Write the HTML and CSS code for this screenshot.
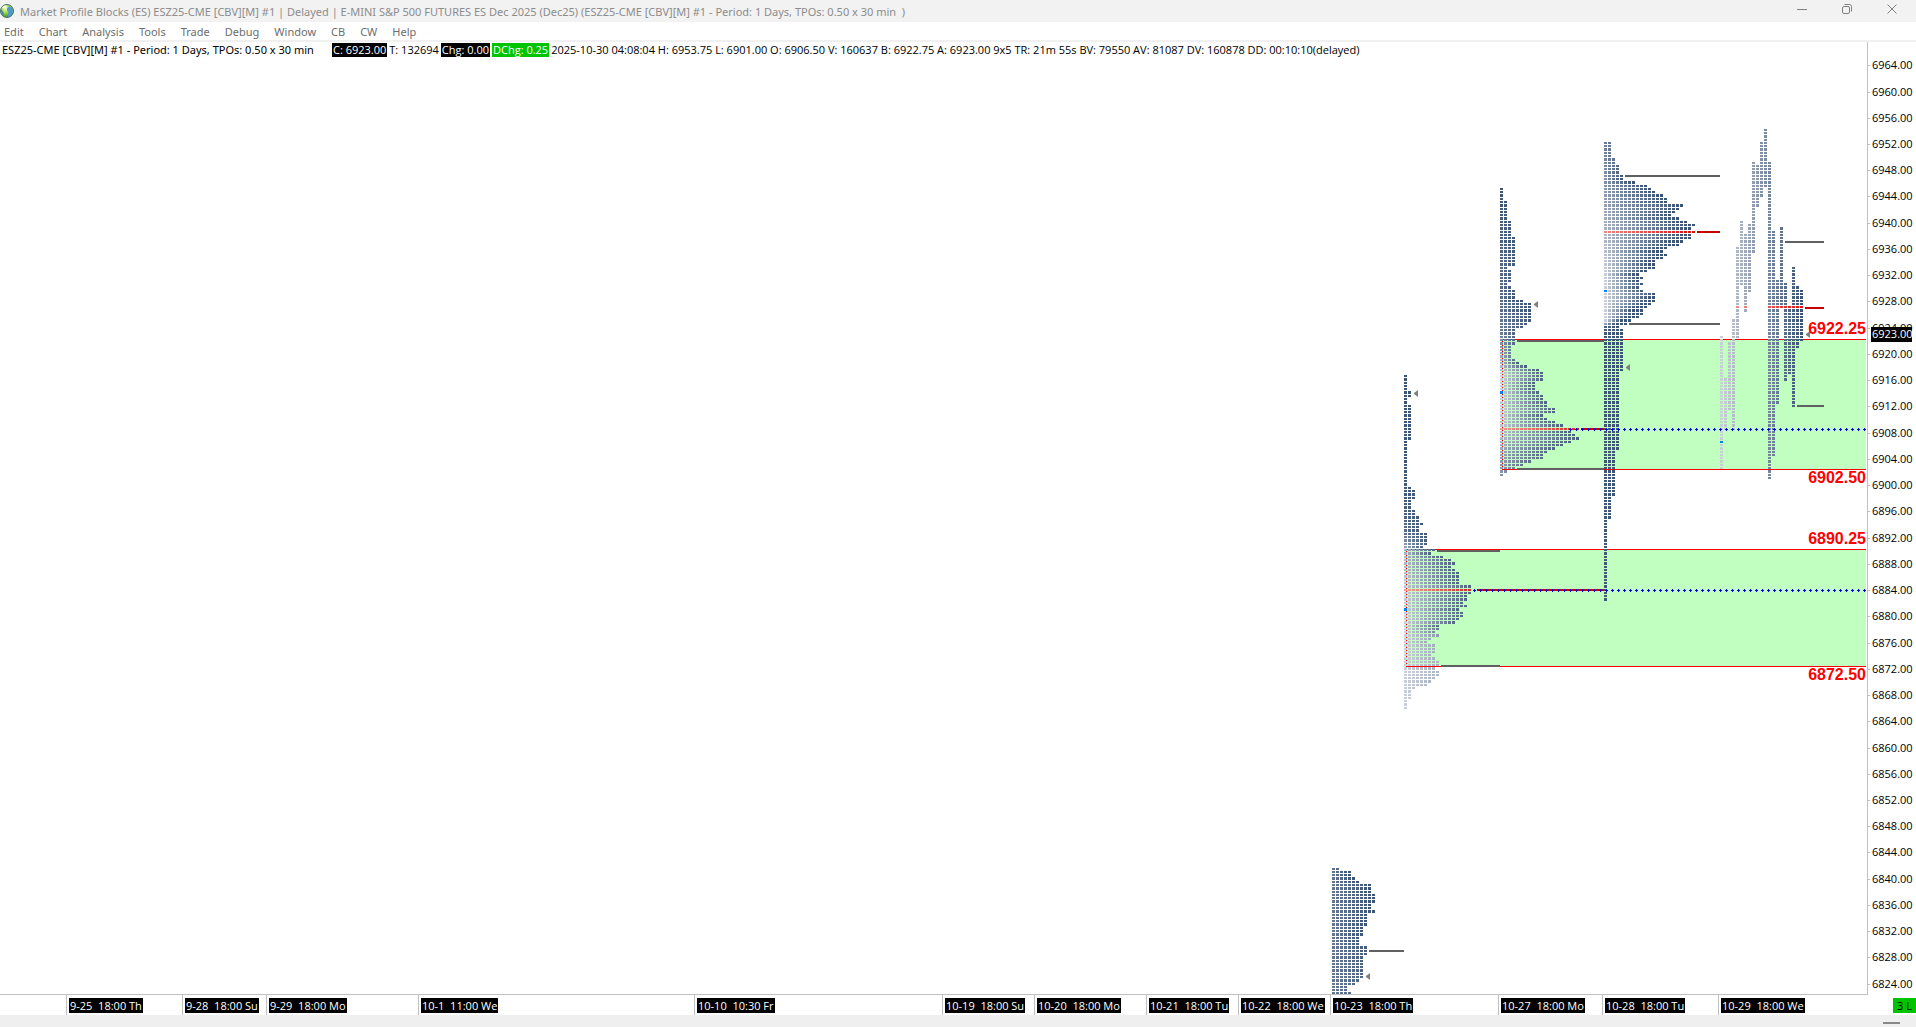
FILE: index.html
```html
<!DOCTYPE html>
<html lang="en">
<head>
    <meta charset="UTF-8">
    <meta name="viewport" content="width=device-width, initial-scale=1.0">
    <title>Market Profile Blocks (ES)</title>
    <link rel="stylesheet" href="styles.css">
</head>
<body>
    <header class="titlebar">
        <svg class="logo" width="14" height="14" viewBox="0 0 14 14">
            <defs>
                <radialGradient id="globe" cx="0.4" cy="0.3" r="0.7">
                    <stop offset="0" stop-color="#f4ffc8"/>
                    <stop offset="0.5" stop-color="#9bd838"/>
                    <stop offset="1" stop-color="#3c8a28"/>
                </radialGradient>
            </defs>
            <circle cx="7" cy="7" r="6.5" fill="url(#globe)" stroke="#4a7078"/>
            <path d="M9 2c3 1 4 3 4 5s-2 5-5 6c-1-2 1-3 0-5s-1-1-1-3 2-1 2-3z" fill="#4f9ad0"/>
            <path d="M1 5c0 4 1 6 3 7-1-2 0-3-1-4s-1-2-2-3z" fill="#3f80b0"/>
            <path d="M2 4c1-2 3-3 5-2-1 2-3 3-5 2z" fill="#fff" opacity="0.8"/>
        </svg>
        <span class="title">Market Profile Blocks (ES) ESZ25-CME [CBV][M] #1 | Delayed | E-MINI S&amp;P 500 FUTURES ES Dec 2025 (Dec25) (ESZ25-CME [CBV][M] #1 - Period: 1 Days, TPOs: 0.50 x 30 min &nbsp;)</span>
        <div class="winButtons">
            <button type="button" aria-label="Minimize"><svg width="10" height="10"><path d="M0 5.5h10"/></svg></button>
            <button type="button" aria-label="Restore"><svg width="10" height="10"><rect x="0.5" y="2.5" width="7" height="7" rx="1.5"/><path d="M2.5 0.5h5a2 2 0 0 1 2 2v5"/></svg></button>
            <button type="button" aria-label="Close"><svg width="10" height="10"><path d="M0.5 0.5l9 9M9.5 0.5l-9 9"/></svg></button>
        </div>
    </header>
    <nav class="menu">
        <button type="button">Edit</button>
        <button type="button">Chart</button>
        <button type="button">Analysis</button>
        <button type="button">Tools</button>
        <button type="button">Trade</button>
        <button type="button">Debug</button>
        <button type="button">Window</button>
        <button type="button">CB</button>
        <button type="button">CW</button>
        <button type="button">Help</button>
    </nav>
    <main class="chart">
        <div class="info">
            <span class="symbol">ESZ25-CME [CBV][M] #1 - Period: 1 Days, TPOs: 0.50 x 30 min</span>
            <span class="tag">C: 6923.00</span>
            <span>T: 132694</span>
            <span class="tag">Chg: 0.00</span>
            <span class="tag up">DChg: 0.25</span>
            <span>2025-10-30 04:08:04 H: 6953.75 L: 6901.00 O: 6906.50 V: 160637 B: 6922.75 A: 6923.00 9x5 TR: 21m 55s BV: 79550 AV: 81087 DV: 160878 DD: 00:10:10(delayed)</span>
        </div>
        <div class="plot">
            <svg id="profiles" width="560" height="952" viewBox="1307 42 560 952"></svg>
        </div>
        <div class="prices">
            <svg id="axis" width="48" height="952" viewBox="1868 42 48 952"></svg>
        </div>
    </main>
    <div class="times">
        <div class="sessions" id="sessions"></div>
        <span class="live">3 L</span>
    </div>
    <footer class="status"><span class="grip"></span></footer>
    <script src="script.js"></script>
</body>
</html>
```

FILE: styles.css
```css
* {
    box-sizing: border-box;
}
body {
    margin: 0;
    height: 100vh;
    display: flex;
    flex-direction: column;
    overflow: hidden;
    background-color: white;
    color: black;
    font-family: "Open Sans", "Noto Sans", sans-serif;
    font-size: 11px;
    line-height: 15px;
}
button {
    padding: 0;
    border: none;
    background: none;
    font: inherit;
    color: inherit;
}
svg {
    display: block;
}
.titlebar {
    display: flex;
    align-items: center;
    height: 22px;
    flex: none;
    background-color: #f2f2f2;
    color: #8c8c8c;
}
.titlebar,
.menu,
.symbol {
    font-family: "Noto Sans", "Open Sans", sans-serif;
}
.title {
    flex: 1;
    margin-left: 6px;
    white-space: nowrap;
    overflow: hidden;
}
.winButtons {
    display: flex;
    gap: 35px;
    padding-right: 19px;
    padding-bottom: 4px;
}
.winButtons path,
.winButtons rect {
    fill: none;
    stroke: #808080;
}
.menu {
    display: flex;
    align-items: center;
    gap: 15px;
    height: 20px;
    flex: none;
    padding-left: 4px;
    border-bottom: 2px solid #f0f0f0;
    color: #6d6d6d;
}
.chart {
    position: relative;
    display: flex;
    flex: 1;
    min-height: 0;
}
.info {
    position: absolute;
    top: 1px;
    left: 2px;
    display: flex;
    gap: 2px;
    line-height: 14px;
    white-space: nowrap;
}
.symbol {
    min-width: 328px;
}
.tag {
    padding: 0 1px;
    background-color: black;
    color: white;
}
.up {
    background-color: #00c400;
}
.plot {
    flex: 1;
    display: flex;
    justify-content: flex-end;
    border-right: 1px solid #c0c0c0;
    border-bottom: 1px solid #c0c0c0;
    overflow: hidden;
}
.prices {
    width: 48px;
    overflow: hidden;
}
.level {
    font: bold 16px "Liberation Sans", sans-serif;
    fill: red;
    text-anchor: end;
}
.times {
    display: flex;
    justify-content: space-between;
    height: 20px;
    flex: none;
}
.sessions {
    display: flex;
    padding-left: 66px;
}
.session {
    padding-left: 2px;
    border-left: 1px solid #c0c0c0;
    white-space: nowrap;
}
.session span {
    display: inline-block;
    margin-top: 3px;
    padding: 0 1px;
    background-color: black;
    color: white;
}
.live {
    width: 23px;
    height: 15px;
    margin-top: 3px;
    padding-left: 4px;
    background-color: #00c400;
    white-space: nowrap;
}
.status {
    display: flex;
    justify-content: flex-end;
    height: 12px;
    flex: none;
    padding: 7px 16px 0 0;
    background-color: #efefef;
}
.grip {
    width: 17px;
    height: 2px;
    background-color: #888;
}
```

FILE: script.js
```js
const svgNS = 'http://www.w3.org/2000/svg';
const plot = document.getElementById('profiles');
const axis = document.getElementById('axis');

function add(parent, name, attrs, text) {
    const el = document.createElementNS(svgNS, name);
    for (const key in attrs) el.setAttribute(key, attrs[key]);
    if (text) el.textContent = text;
    parent.appendChild(el);
}
function box(x, y, w, h, fill) {
    add(plot, 'rect', { x: x, y: y, width: w, height: h, fill: fill });
}
// top of a half point row
function rowY(i) {
    return Math.floor(142.42 + 3.2838 * i);
}
function rowAt(y) {
    return Math.round((y - 142.42) / 3.2838);
}
function mix(a, b, t) {
    t = Math.max(0, Math.min(1, t));
    return 'rgb(' + a.map((v, n) => Math.round(v + (b[n] - v) * t)).join(',') + ')';
}
// early blocks are pale, late ones dark
function tone(t) {
    return mix([201, 206, 216], [59, 84, 117], t);
}
function pocTone(t) {
    return mix([245, 165, 160], [215, 20, 20], t);
}
function block(x, i, fill) {
    box(x, rowY(i), 3, rowY(i + 1) - rowY(i) - 1, fill);
}

// value areas
function zone(x, top, bottom) {
    box(x, top, 1866 - x, bottom - top, '#c0ffc0');
    box(x, top, 1, bottom - top, 'red');
    box(x, top, 1866 - x, 1, 'red');
    box(x, bottom, 1866 - x, 1, 'red');
}
zone(1502, 339, 469);
zone(1406, 549, 666);

// rows: 'width*count', shades: [from row, left tone, right tone]
const profiles = [
    {
        x: 1332, start: 221, poc: -1, open: -1,
        rows: '2 5*2 6 7 10*3 11*3 10*2 11 9*4 8*3 7*3 9*3 8*7 7 6 4*2 5',
        shades: [[0, .75, 1], [18, .72, .98], [38, .72, .8]]
    },
    {
        x: 1404, start: 71, poc: 65, open: 71,
        rows: '1*5 2*2 1*2 2*11 1*14 2 3*3 2*3 3*2 4*2 5 4*2 6*4 5 8 7 10 12 13 12 13 14*4 17*3 16*2 15 16 14 15*2 14 13 9*2 8 9 7 6 8*3 7 8 9*2 8 9*2 8 7 6 3 2*3 1*3',
        shades: [[0, 1, 1], [38, .95, .95], [48, .8, .95], [53, .25, .85], [56, .2, .85], [66, .05, .85], [76, 0, .8], [80, 0, .3], [88, 0, .22], [101, 0, .1]]
    },
    {
        x: 1500, start: 14, poc: 73, open: 62,
        rows: '1*4 2*6 3*5 4*9 2 3*4 2 3 4*3 6 8*6 7 6 4*5 3*4 4 5 7 10 11*3 9*3 10 11*2 12*2 14*2 11 12 14 16 20 18 19 20 18 16 14 12 11*2 8 6 4 2 1',
        shades: [[0, 1, 1], [22, .85, .95], [34, .8, 1], [43, .7, .9], [54, .2, .9], [56, 0, .85], [70, .05, .85], [76, .2, .9], [82, .4, .8], [87, .5, .6]]
    },
    {
        x: 1604, start: 0, poc: 27, open: 45,
        rows: '2*5 3*2 4*3 5*2 8 11 12 13 15 16*2 20 19 18 17 19 21 23 22 23 22*2 20 19 16 15 16 15 13*3 11 9 10 9 10 9 10 13*3 12 11 10*2 9 7 6 4 5*13 4*24 3*14 2*7 1*25',
        shades: [[0, .68, .8], [12, .5, 1], [20, .35, 1], [32, .15, 1.1], [40, 0, 1.1], [45, 0, .9], [54, 0, 1.6], [55, .4, 1.6], [56, .9, 1], [60, 1, 1], [139, .95, 1]]
    }
];
profiles.forEach(p => {
    const widths = [];
    p.rows.split(' ').forEach(part => {
        const bits = part.split('*');
        for (let n = 0; n < (bits[1] || 1); n++) widths.push(+bits[0]);
    });
    widths.forEach((w, k) => {
        let s = 0;
        while (s < p.shades.length - 2 && p.shades[s + 1][0] <= k) s++;
        const a = p.shades[s];
        const b = p.shades[s + 1];
        const f = Math.min(1, (k - a[0]) / (b[0] - a[0]));
        const left = a[1] + (b[1] - a[1]) * f;
        const right = a[2] + (b[2] - a[2]) * f;
        for (let c = 0; c < w; c++) {
            const t = left + (right - left) * c / Math.max(w - 1, 4);
            let fill = k === p.poc ? pocTone(t) : tone(t);
            if (k === p.open && c === 0) fill = '#0080ff';
            block(p.x + c * 4, p.start + k, fill);
        }
    });
});

// the running session is split: one column for each half hour, [top, last row]
const split = [
    [336, 466], [378, 427], [342, 410], [319, 427], [247, 335], [221, 283], [234, 309],
    [224, 289], [162, 251], [165, 205], [142, 194], [129, 185], [162, 477], [231, 453],
    [280, 402], [227, 306], [283, 379], [306, 372], [267, 404], [286, 346], [290, 339]
];
split.forEach((range, c) => {
    const last = rowAt(range[1]);
    for (let i = rowAt(range[0]); i <= last; i++) {
        let fill = i === 50 ? pocTone(c / 20) : tone(c / 20);
        if (c === 0 && i === 91) fill = '#0080ff';
        block(1720 + c * 4, i, fill);
    }
});

// value area edges and points of control: x1, x2, y
[
    [1369, 1404, 950], [1437, 1500, 550], [1441, 1500, 665], [1517, 1604, 340], [1517, 1604, 468],
    [1625, 1720, 175], [1629, 1720, 323], [1785, 1824, 241], [1797, 1824, 405]
].forEach(l => box(l[0], l[2], l[1] - l[0], 2, '#606060'));
[
    [1477, 1604, 589], [1581, 1604, 428], [1697, 1720, 231], [1805, 1824, 307]
].forEach(l => box(l[0], l[2], l[1] - l[0], 2, '#c40000'));

// extended points of control
[[1473, 590], [1569, 429]].forEach(l => {
    for (let x = l[0]; x < 1865; x += 6) {
        box(x, l[1], 3, 1, 'blue');
        box(x + 1, l[1] - 1, 1, 3, 'blue');
    }
});

// closes
[[1366, 976], [1414, 393], [1534, 304], [1626, 367], [1806, 334]].forEach(m => {
    add(plot, 'path', { d: 'M' + m[0] + ' ' + m[1] + 'l4 -3v7l-4 -3z', fill: '#808080' });
});

[['6922.25', 334], ['6902.50', 483], ['6890.25', 544], ['6872.50', 680]].forEach(l => {
    add(plot, 'text', { x: 1866, y: l[1], class: 'level' }, l[0]);
});

// price scale
for (let p = 6964; p >= 6824; p -= 4) {
    const y = Math.round(144 + (6952 - p) * 6.56);
    add(axis, 'rect', { x: 1868, y: y, width: 2, height: 1, fill: '#c0c0c0' });
    add(axis, 'text', { x: 1872, y: y + 4 }, p + '.00');
}
add(axis, 'rect', { x: 1871, y: 327, width: 41, height: 15, fill: 'black' });
add(axis, 'text', { x: 1872, y: 338, fill: 'white' }, '6923.00');

// time scale
const starts = [
    [66, '9-25', '18:00 Th'], [182, '9-28', '18:00 Su'], [266, '9-29', '18:00 Mo'],
    [418, '10-1', '11:00 We'], [694, '10-10', '10:30 Fr'], [942, '10-19', '18:00 Su'],
    [1034, '10-20', '18:00 Mo'], [1146, '10-21', '18:00 Tu'], [1238, '10-22', '18:00 We'],
    [1330, '10-23', '18:00 Th'], [1498, '10-27', '18:00 Mo'], [1602, '10-28', '18:00 Tu'],
    [1718, '10-29', '18:00 We']
];
document.getElementById('sessions').innerHTML = starts.map((s, n) => {
    const end = n + 1 < starts.length ? starts[n + 1][0] : 1810;
    return '<div class="session" style="width:' + (end - s[0]) + 'px"><span>' + s[1] + '&nbsp; ' + s[2] + '</span></div>';
}).join('');
```
